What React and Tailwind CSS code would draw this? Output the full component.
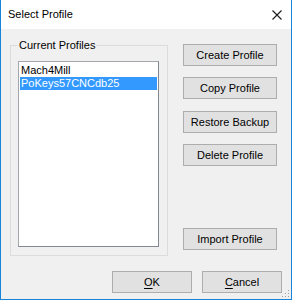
export default function App() {
  const font = { fontFamily: '"Liberation Sans", Arial, sans-serif' };
  const Btn = ({ children, className = "" }) => (
    <div
      className={
        "flex h-[22px] items-center justify-center border border-[#adadad] bg-[#e1e1e1] text-[11px] leading-[13px] text-black " +
        className
      }
    >
      {children}
    </div>
  );
  return (
    <div
      className="relative flex h-[300px] w-[292px] flex-col border-x border-b border-[#1883d7] bg-[#f0f0f0]"
      style={font}
    >
      {/* title bar */}
      <div className="flex h-[29px] items-center justify-between bg-white pl-[7px] pr-[9px]">
        <span className="text-[11px] leading-[13px] text-black">Select Profile</span>
        <svg width="10" height="10" viewBox="0 0 10 10" className="mt-[1px]">
          <path d="M0.5 0.5 L9.5 9.5 M9.5 0.5 L0.5 9.5" stroke="#1a1a1a" strokeWidth="1.1" fill="none" />
        </svg>
      </div>

      {/* body */}
      <div className="flex flex-col pl-[9px] pr-[9px]">
        <div className="mt-[15px] flex">
          {/* group box */}
          <div className="relative mt-[1px] h-[211px] w-[158px] border border-[#dcdcdc]">
            <span className="absolute left-[7px] top-[-7px] bg-[#f0f0f0] px-[1px] text-[11px] leading-[13px] text-black">
              Current Profiles
            </span>
            <div className="ml-[7px] mt-[15px] h-[186px] w-[141px] border border-[#a3a7ad] border-b-[#828790] border-r-[#828790] bg-white px-[1px] pt-[2px]">
              <div className="h-[13px] pl-[1px] text-[11px] leading-[13px] text-black">Mach4Mill</div>
              <div className="h-[13px] bg-[#3399ff] pl-[1px] text-[11px] leading-[13px] text-white">PoKeys57CNCdb25</div>
            </div>
          </div>

          {/* right buttons */}
          <div className="ml-[15px] flex w-[94px] flex-col">
            <Btn>Create Profile</Btn>
            <Btn className="mt-[11px]">Copy Profile</Btn>
            <Btn className="mt-[12px]">Restore Backup</Btn>
            <Btn className="mt-[11px]">Delete Profile</Btn>
            <Btn className="mt-[62px]">Import Profile</Btn>
          </div>
        </div>

        {/* bottom buttons */}
        <div className="mt-[15px] flex justify-end gap-[10px]">
          <Btn className="w-[80px]">
            <span className="underline underline-offset-2">O</span>K
          </Btn>
          <Btn className="w-[80px]">
            <span className="underline underline-offset-2">C</span>ancel
          </Btn>
        </div>
      </div>

      {/* size grip */}
      <svg width="9" height="9" viewBox="0 0 9 9" className="absolute bottom-[1px] right-[1px]">
        <rect x="7" y="1" width="1" height="1" fill="#a0a0a0" />
        <rect x="4" y="4" width="1" height="1" fill="#a0a0a0" />
        <rect x="7" y="4" width="1" height="1" fill="#a0a0a0" />
        <rect x="1" y="7" width="1" height="1" fill="#a0a0a0" />
        <rect x="4" y="7" width="1" height="1" fill="#a0a0a0" />
        <rect x="7" y="7" width="1" height="1" fill="#a0a0a0" />
      </svg>
    </div>
  );
}
